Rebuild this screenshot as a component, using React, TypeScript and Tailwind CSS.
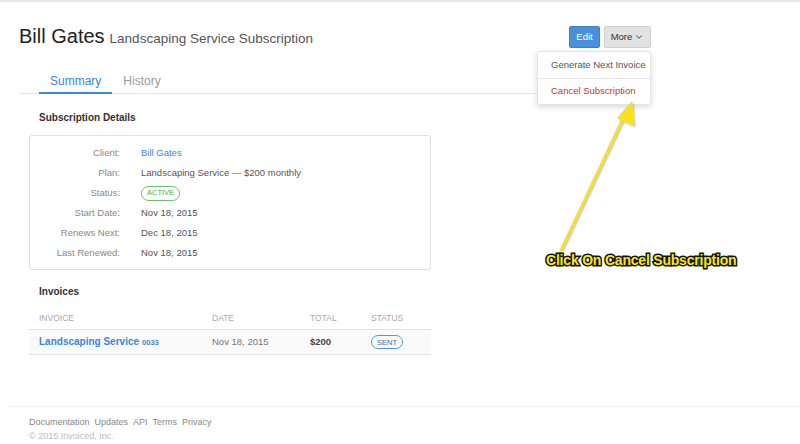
import { ChevronDown } from "lucide-react";

const details = [
    { label: "Client:", value: "Bill Gates", kind: "link" },
    { label: "Plan:", value: "Landscaping Service — $200 monthly", kind: "text" },
    { label: "Status:", value: "ACTIVE", kind: "badge" },
    { label: "Start Date:", value: "Nov 18, 2015", kind: "text" },
    { label: "Renews Next:", value: "Dec 18, 2015", kind: "text" },
    { label: "Last Renewed:", value: "Nov 18, 2015", kind: "text" },
];

function DetailRow({ label, value, kind }: { label: string; value: string; kind: string }) {
    return (
        <div className="flex h-[20px] items-center">
            <div className="w-[90px] text-right text-[#888]">{label}</div>
            <div className="ml-[21px]">
                {kind === "link" && <span className="text-[#3a87d6]">{value}</span>}
                {kind === "text" && <span className="text-[#555]">{value}</span>}
                {kind === "badge" && (
                    <span className="inline-flex h-[15px] items-center rounded-full border border-[#6cc070] px-[5px] text-[7.5px] text-[#4cae4c]">
                        {value}
                    </span>
                )}
            </div>
        </div>
    );
}

function App() {
    return (
        <div className="relative h-[444px] w-[800px] overflow-hidden border-t-2 border-[#e6e6e6] bg-white font-['Liberation_Sans',Arial,sans-serif]">
            {/* header */}
            <div className="ml-[19px] w-[632px]">
                <div className="flex items-start justify-between pt-[24px]">
                    <div className="flex items-baseline leading-[20px]">
                        <span className="text-[20px] text-[#222]">Bill Gates</span>
                        <span className="ml-[5px] text-[13.5px] text-[#555]">Landscaping Service Subscription</span>
                    </div>
                    <div className="flex gap-[4px]">
                        <button className="h-[22px] w-[31px] rounded-[2px] border border-[#3b82c8] bg-[#4a90d9] text-[9.5px] text-white">Edit</button>
                        <button className="flex h-[22px] w-[47px] items-center justify-center gap-[2px] rounded-[2px] border border-[#cfcfcf] bg-[#e2e2e2] text-[9.5px] text-[#333]">
                            More <ChevronDown size={10} strokeWidth={2.2} />
                        </button>
                    </div>
                </div>

                {/* tabs */}
                <div className="mt-[23px] flex border-b border-[#e3e3e3] pl-[20px] text-[12px] leading-[18px]">
                    <div className="-mb-px border-b-2 border-[#3a87d6] px-[11px] pb-[2px] text-[#3a87d6]">Summary</div>
                    <div className="px-[11px] pb-[2px] text-[#999]">History</div>
                </div>
            </div>

            {/* content */}
            <div className="ml-[29px] w-[402px] text-[9.5px]">
                <div className="mt-[16px] pl-[10px] text-[10px] font-bold text-[#333]">Subscription Details</div>
                <div className="mt-[10px] rounded-[3px] border border-[#e0e0e0] pb-[6px] pt-[7px]">
                    {details.map((d) => (
                        <DetailRow key={d.label} {...d} />
                    ))}
                </div>

                <div className="mt-[14px] pl-[10px] text-[10px] font-bold text-[#333]">Invoices</div>
                <div className="mt-[8px]">
                    <div className="grid h-[23px] grid-cols-[173px_98px_61px_1fr] items-center border-b border-[#e3e3e3] pl-[10px] text-[8.5px] text-[#aaa]">
                        <div>INVOICE</div>
                        <div>DATE</div>
                        <div>TOTAL</div>
                        <div>STATUS</div>
                    </div>
                    <div className="grid h-[25px] grid-cols-[173px_98px_61px_1fr] items-center border-b border-[#e3e3e3] bg-[#fafafa] pl-[10px]">
                        <div className="text-[#3a87d6]">
                            <span className="text-[10px] font-bold">Landscaping Service</span>
                            <span className="ml-[3px] text-[7.5px] font-bold">0033</span>
                        </div>
                        <div className="text-[#777]">Nov 18, 2015</div>
                        <div className="font-bold text-[#444]">$200</div>
                        <div>
                            <span className="inline-flex h-[14px] items-center rounded-full border border-[#5a96d6] px-[5px] text-[7.5px] text-[#3a6fb0]">SENT</span>
                        </div>
                    </div>
                </div>
            </div>

            {/* footer */}
            <div className="ml-[8px] mt-[51px] border-t border-[#eeeeee] pl-[21px] pt-[9px] text-[9px]">
                <div className="flex gap-[5px] text-[#888]">
                    <span>Documentation</span>
                    <span>Updates</span>
                    <span>API</span>
                    <span>Terms</span>
                    <span>Privacy</span>
                </div>
                <div className="text-[#bbb]">© 2015 Invoiced, Inc.</div>
            </div>

            {/* dropdown menu */}
            <div className="absolute left-[537px] top-[49px] w-[114px] rounded-[3px] border border-[#e4e4e4] bg-white text-[9.5px] shadow-[0_2px_6px_rgba(0,0,0,0.15)]">
                <div className="flex h-[26px] items-center pl-[13px] text-[#555]">Generate Next Invoice</div>
                <div className="border-t border-[#e8e8e8]" />
                <div className="flex h-[25px] items-center pl-[13px] text-[#c0392b]">Cancel Subscription</div>
            </div>

            {/* annotation arrow */}
            <svg className="absolute left-0 top-0" width="800" height="444" viewBox="0 0 800 444">
                <defs>
                    <filter id="sh" x="-20%" y="-20%" width="140%" height="140%">
                        <feDropShadow dx="1" dy="1" stdDeviation="0.8" floodColor="#000" floodOpacity="0.35" />
                    </filter>
                </defs>
                <g filter="url(#sh)">
                    <line x1="561" y1="248" x2="624" y2="114" stroke="#f6e21b" strokeWidth="2.5" strokeLinecap="round" />
                    <polygon points="632,99 634,124 617,116" fill="#f6e21b" />
                </g>
            </svg>
            <div className="absolute left-[546px] top-[248px] text-[14px] font-bold tracking-[-0.2px] text-[#f8e71c] [-webkit-text-stroke:3px_#111] [paint-order:stroke_fill]">
                Click On Cancel Subscription
            </div>
        </div>
    );
}

export default App;
